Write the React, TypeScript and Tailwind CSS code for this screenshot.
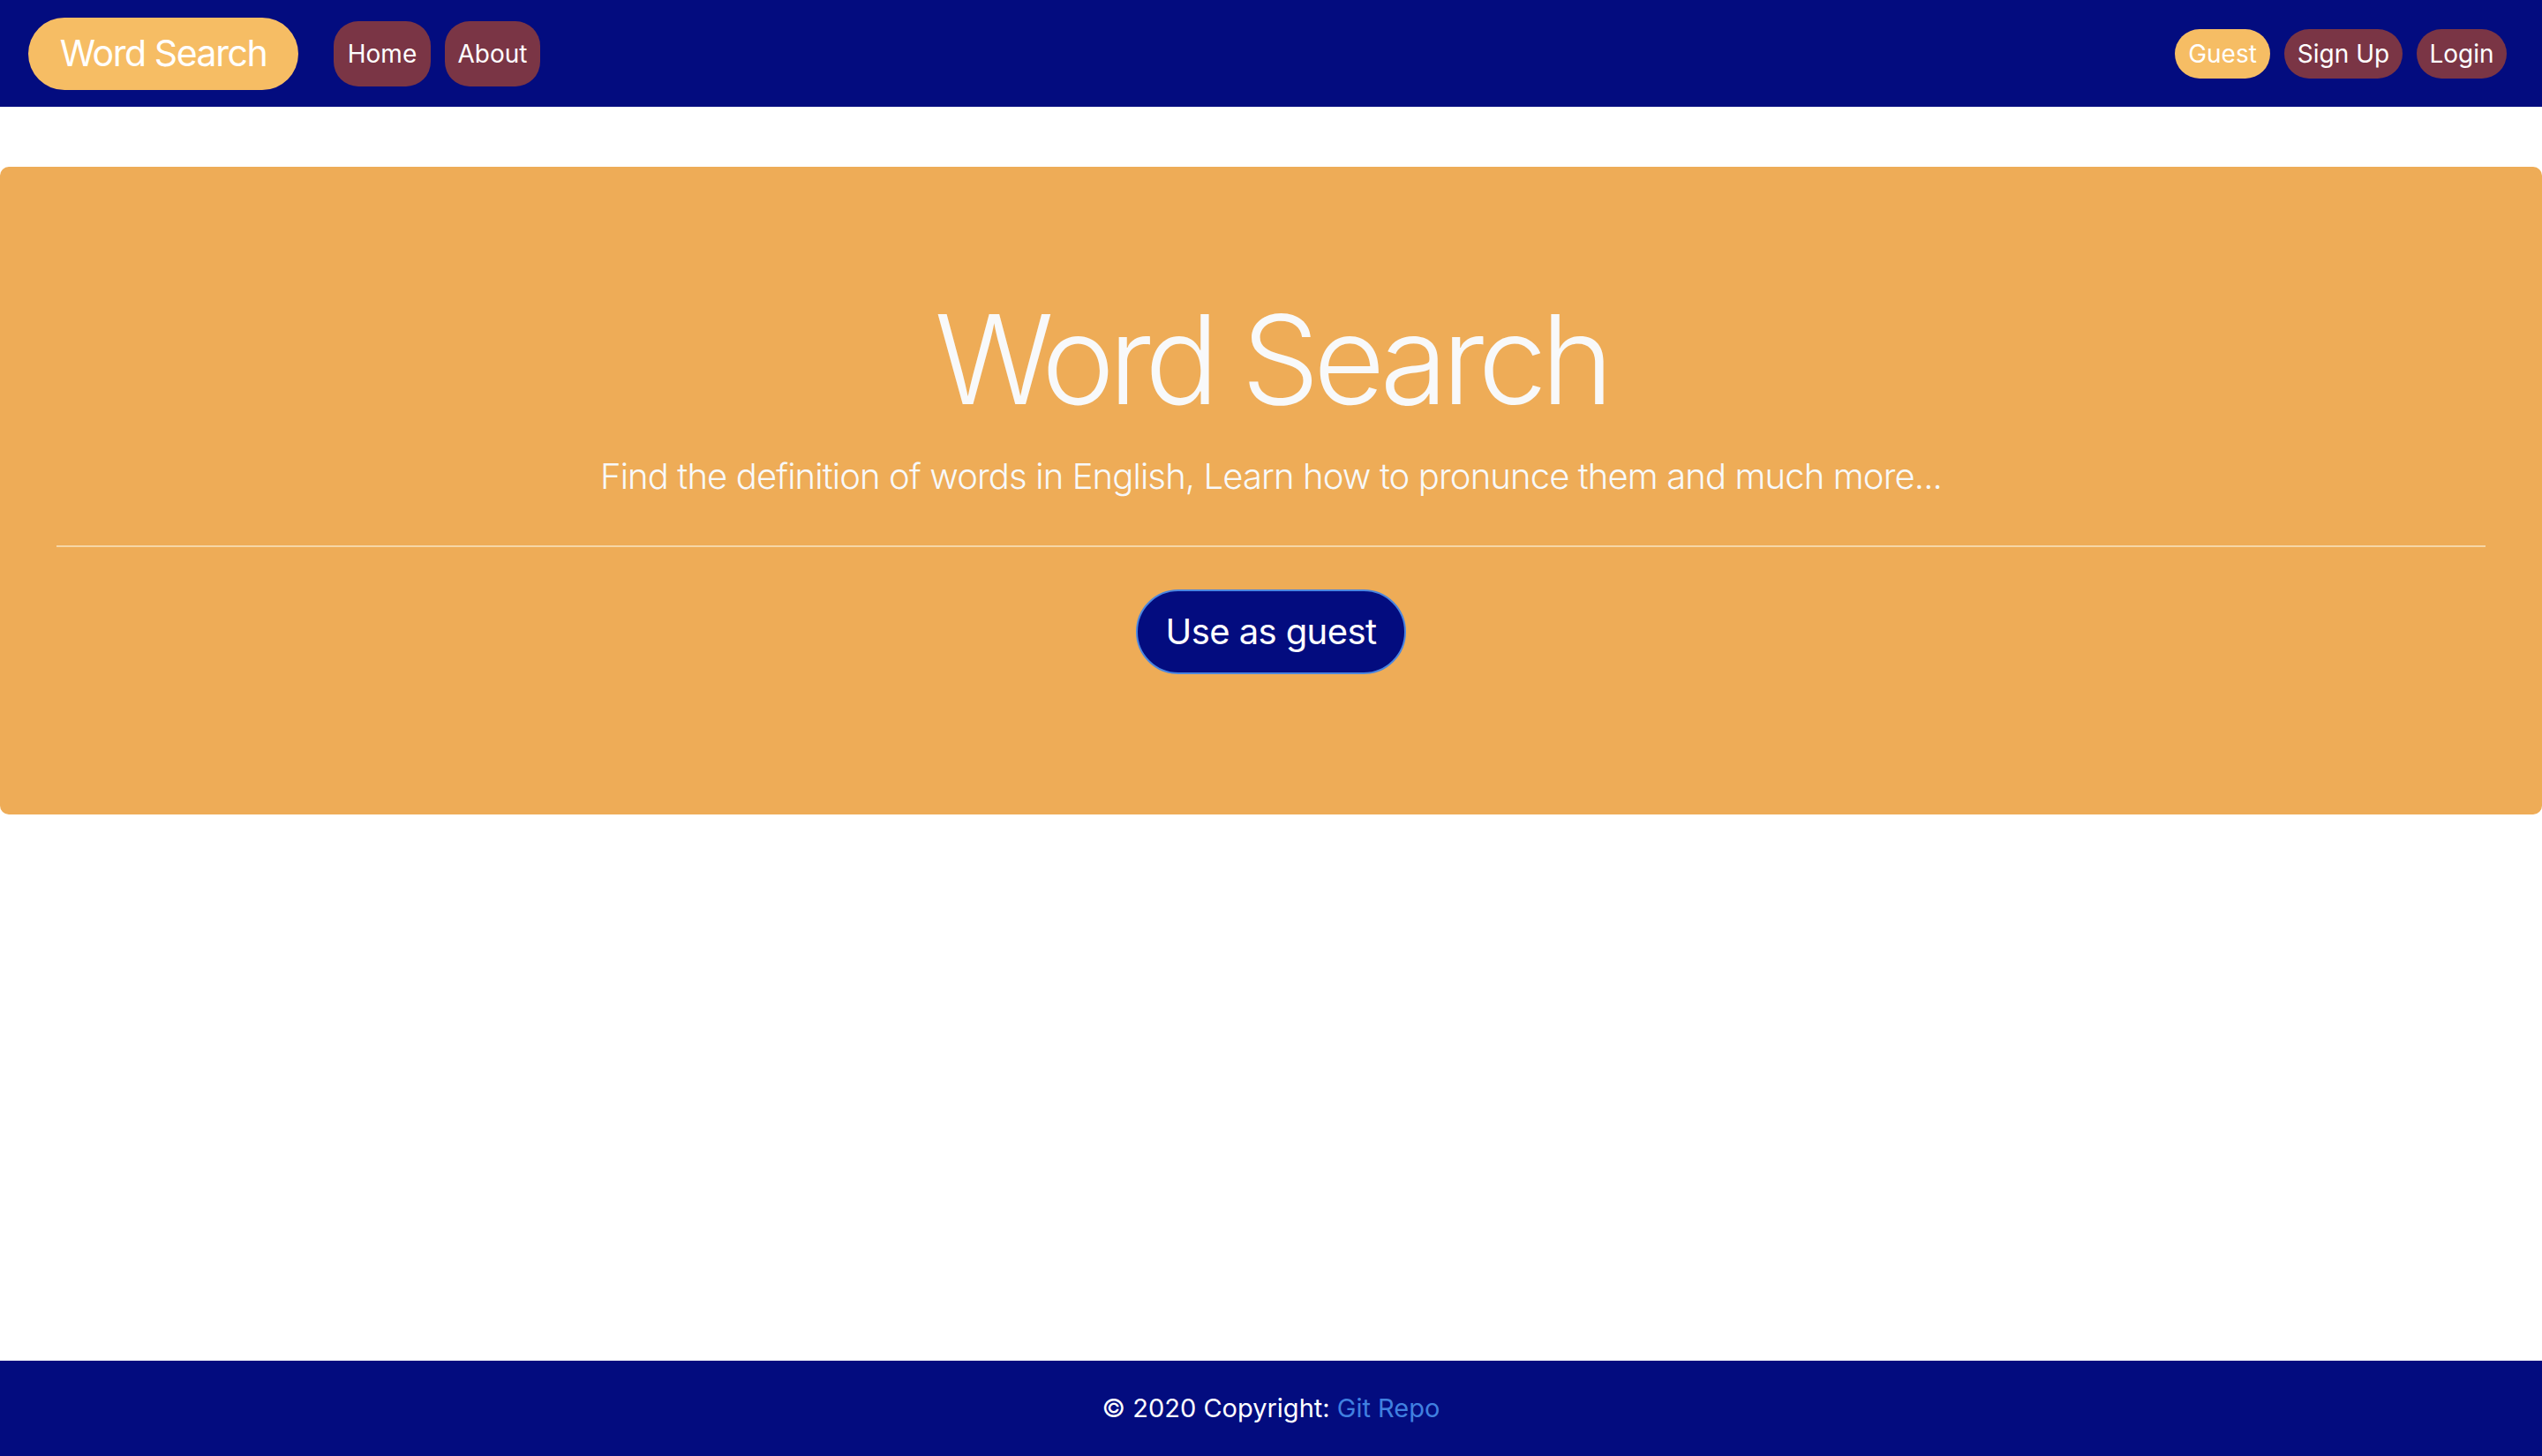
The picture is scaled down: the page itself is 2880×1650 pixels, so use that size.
import React from "react";

const navLinks = ["Home", "About"];

export default function App() {
  return (
    <div className="min-h-screen flex flex-col bg-white font-['Inter','Liberation_Sans',sans-serif]">
      {/* navbar */}
      <nav className="h-[121px] bg-[#030c7f] flex items-center pl-[32px] pr-[40px]">
        <a
          href="#"
          className="w-[306px] h-[82px] rounded-full bg-[#f6bd64] text-white text-[41px] tracking-[-0.035em] flex items-center justify-center"
        >
          Word Search
        </a>
        <div className="flex gap-[16px] ml-[40px]">
          {navLinks.map((link) => (
            <a
              key={link}
              href="#"
              className={`h-[74px] rounded-[28px] bg-[#7a3545] text-white text-[28px] flex items-center justify-center ${
                link === "Home" ? "w-[110px]" : "w-[108px]"
              }`}
            >
              {link}
            </a>
          ))}
        </div>
        <div className="ml-auto flex items-center gap-[16px]">
          <a href="#" className="w-[108px] h-[56px] rounded-full bg-[#f6bd64] text-white text-[28px] flex items-center justify-center">
            Guest
          </a>
          <a href="#" className="w-[134px] h-[56px] rounded-full bg-[#7a3545] text-white text-[28px] flex items-center justify-center">
            Sign Up
          </a>
          <a href="#" className="w-[102px] h-[56px] rounded-full bg-[#7a3545] text-white text-[28px] flex items-center justify-center">
            Login
          </a>
        </div>
      </nav>

      {/* jumbotron */}
      <main className="flex-1 pt-[68px]">
        <section className="bg-[#eeac57] rounded-[10px] pt-[132px] pb-[159px] px-[64px] flex flex-col items-center text-[#f8f9fa]">
          <h1 className="text-[140px] leading-[172px] font-light tracking-[-0.05em]">Word Search</h1>
          <p className="mt-[17px] text-[40px] leading-[60px] font-light tracking-[-0.022em]">
            Find the definition of words in English, Learn how to pronunce them and much more...
          </p>
          <hr className="w-full mt-[48px] border-0 h-[2px] bg-[#f6d6a6]" />
          <a
            href="#"
            className="mt-[48px] w-[306px] h-[96px] rounded-full bg-[#030c7f] border-2 border-[#4a86e0] text-white text-[40px] tracking-[-0.015em] flex items-center justify-center"
          >
            Use as guest
          </a>
        </section>
      </main>

      {/* footer */}
      <footer className="h-[108px] bg-[#030c7f] flex items-center justify-center text-white text-[29px] leading-[42px]">
        <span>
          © 2020 Copyright: <a href="#" className="text-[#4080e0]">Git Repo</a>
        </span>
      </footer>
    </div>
  );
}
